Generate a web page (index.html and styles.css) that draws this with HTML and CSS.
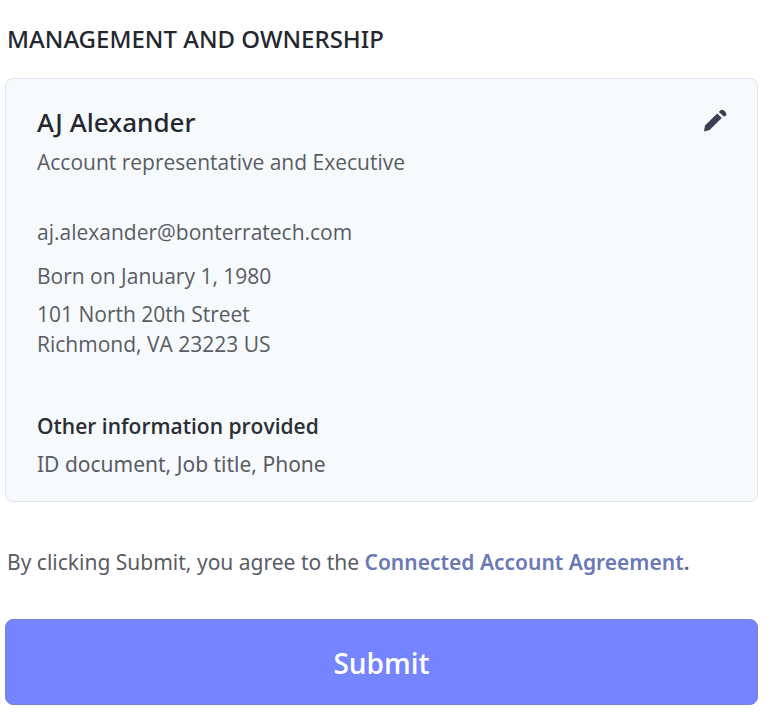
FILE: index.html
```
<!DOCTYPE html>
<html lang="en">
<head>
	<meta charset="UTF-8">
	<meta name="viewport" content="width=device-width, initial-scale=1.0">
	<title>Management and ownership</title>
	<link rel="stylesheet" href="styles.css">
</head>
<body>
	<form class="review">
		<h2 class="section-title">MANAGEMENT AND OWNERSHIP</h2>
		<section class="card">
			<div class="card-header">
				<h3 class="name">AJ Alexander</h3>
				<button type="button" class="edit" aria-label="Edit">
					<svg width="24" height="24" viewBox="0 0 24 24" fill="#3c3f4e">
						<path d="M1 22.500L2 16.500L14.200 4.400L18.800 9L6.600 21.100zM15.800 3L17.600 1.200Q18.400 0.400 19.600 0.800Q22.800 2.200 23.500 5.200Q23.600 6 22.800 6.600L21.200 7.800z"/>
					</svg>
				</button>
			</div>
			<p class="role">Account representative and Executive</p>
			<p class="email">aj.alexander@bonterratech.com</p>
			<p class="born">Born on January 1, 1980</p>
			<p class="address">101 North 20th Street<br>Richmond, VA 23223 US</p>
			<h4 class="other-title">Other information provided</h4>
			<p class="other">ID document, Job title, Phone</p>
		</section>
		<p class="terms">By clicking Submit, you agree to the <a href="#">Connected Account Agreement</a><b>.</b></p>
		<button type="submit" class="submit">Submit</button>
	</form>
</body>
</html>
```
FILE: styles.css
```
* {
	box-sizing: border-box;
}
body {
	margin: 0;
	background: #fff;
	color: #5a5c64;
	font-family: "Open Sans", "Noto Sans", sans-serif;
	font-size: 21px;
	line-height: 30px;
}
h2, h3, h4, p {
	margin: 0;
}
.review {
	padding: 24px 15px 12px 5px;
}
.section-title {
	padding-left: 2px;
	color: #24272f;
	font-family: "Noto Sans", "Open Sans", sans-serif;
	font-size: 24px;
	font-weight: 500;
	line-height: 30px;
}
.card {
	margin-top: 24px;
	padding: 28px 30px 22px 31px;
	background: #f6fafd;
	border: 1px solid #dfe5ec;
	border-radius: 8px;
}
.card-header {
	display: flex;
	justify-content: space-between;
}
.name {
	color: #24272f;
	font-family: "Noto Sans", "Open Sans", sans-serif;
	font-size: 26px;
	font-weight: 500;
	line-height: 30px;
}
.edit {
	display: flex;
	padding: 2px 0 0;
	background: none;
	border: 0;
	cursor: pointer;
}
.role {
	margin-top: 10px;
}
.email {
	margin-top: 40px;
}
.born {
	margin-top: 14px;
}
.address {
	margin-top: 8px;
}
.other-title {
	margin-top: 52px;
	color: #2c2e35;
	font-size: 21px;
	font-weight: 600;
}
.other {
	margin-top: 8px;
}
.other, .terms {
	font-family: "Noto Sans", "Open Sans", sans-serif;
}
.terms {
	margin-top: 45px;
	padding-left: 2px;
}
.terms a {
	color: #6b79b5;
	font-weight: 600;
	text-decoration: none;
}
.terms b {
	font-weight: 600;
}
.submit {
	display: block;
	width: 100%;
	height: 86px;
	margin-top: 42px;
	padding: 2px 0 0;
	color: #fff;
	background: #7584ff;
	border: 1px solid #7a82dc;
	border-radius: 8px;
	font: 600 28px "Open Sans", sans-serif;
	cursor: pointer;
}
```
